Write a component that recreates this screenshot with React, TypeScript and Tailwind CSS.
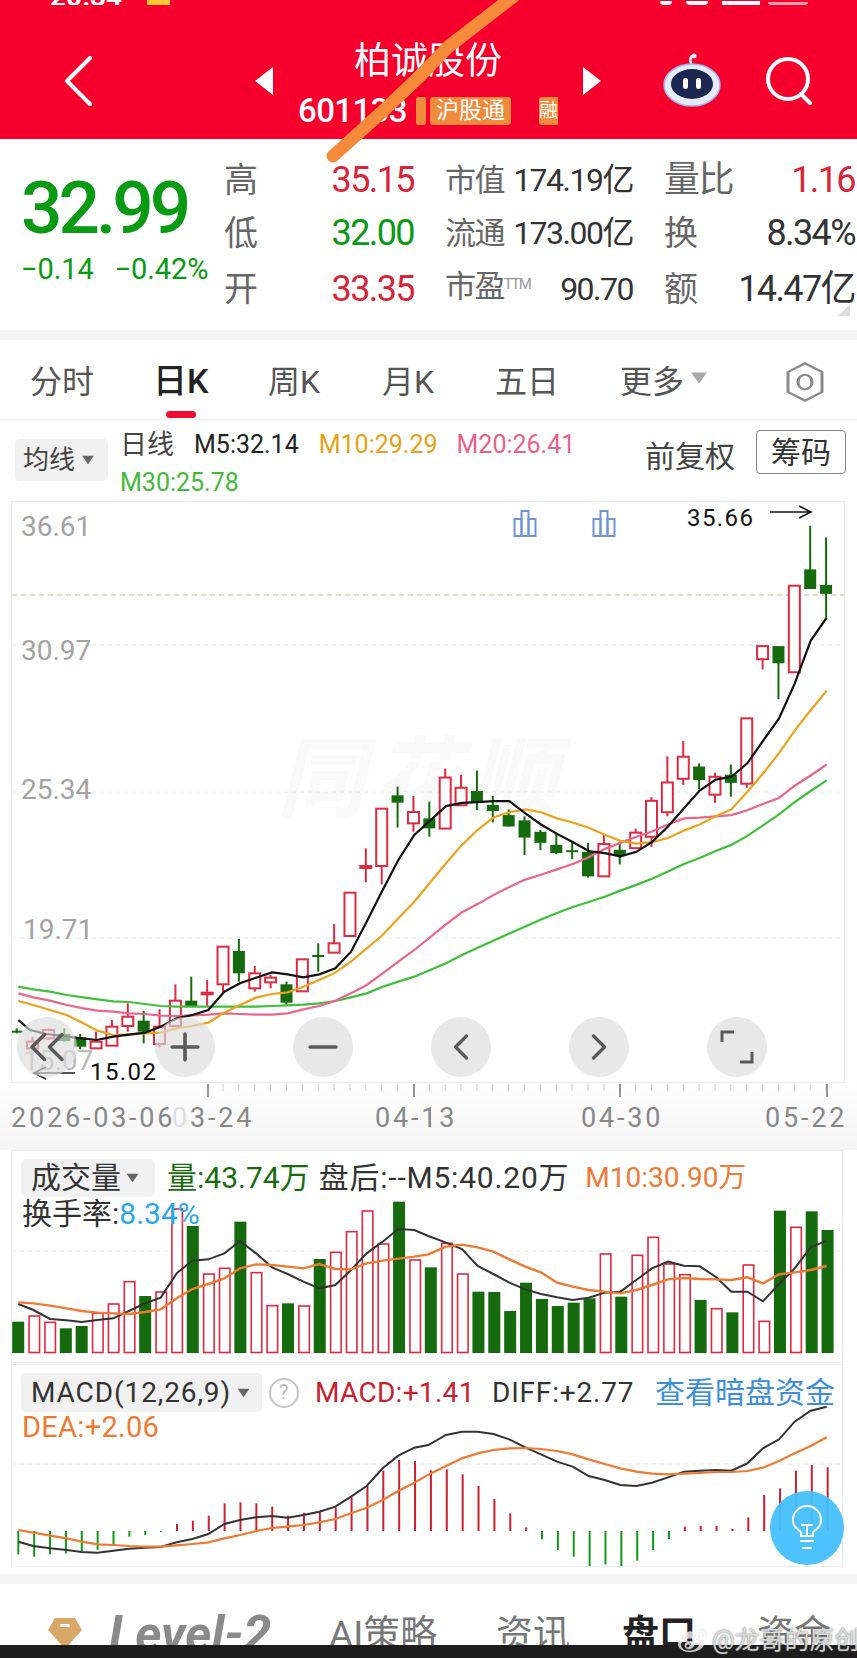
import React from "react";
import { ChevronLeft, ChevronRight, ChevronsLeft, Minus, Plus } from "lucide-react";
import { FaWeibo } from "react-icons/fa";

type P = [number, number];
const X = (i: number) => 16.7 + 15.87 * i;
const A = (v: number) => 640 + v / 3;
const B = (v: number) => 500 + v / 2.45;

// type, bodyTop, bodyBottom, wickTop, wickBottom (zoom units; first 27 use A, the rest use B)
const candles: [string, number, number, number, number][] = [
  ["g", 1172, 1178, 1165, 1180], ["r", 1205, 1225, 1190, 1228], ["r", 1170, 1195, 1165, 1200], ["g", 1182, 1203, 1165, 1205],
  ["g", 1192, 1220, 1182, 1228], ["r", 1205, 1225, 1175, 1225], ["r", 1160, 1217, 1140, 1217], ["r", 1130, 1158, 1090, 1175],
  ["g", 1142, 1175, 1113, 1210], ["r", 1160, 1212, 1108, 1222], ["r", 1082, 1158, 1033, 1158], ["g", 1082, 1098, 1010, 1098],
  ["r", 1058, 1063, 1020, 1098], ["r", 920, 1033, 920, 1060], ["g", 933, 1000, 897, 1025], ["r", 1000, 1045, 978, 1055],
  ["r", 1013, 1027, 1005, 1045], ["g", 1033, 1088, 1025, 1097], ["r", 958, 1054, 958, 1054], ["g", 945, 950, 910, 995],
  ["r", 910, 938, 852, 938], ["r", 758, 888, 758, 888], ["r", 678, 684, 625, 727], ["r", 506, 678, 506, 733],
  ["g", 466, 488, 440, 563], ["r", 516, 550, 468, 575], ["g", 535, 565, 485, 590],
  ["r", 680, 805, 658, 805], ["r", 705, 748, 673, 748], ["g", 713, 740, 663, 760], ["g", 747, 762, 725, 790],
  ["g", 772, 800, 758, 800], ["g", 785, 827, 775, 870], ["g", 813, 840, 808, 858], ["g", 845, 865, 815, 868],
  ["g", 858, 862, 838, 880], ["g", 862, 922, 840, 925], ["r", 843, 922, 820, 922], ["g", 857, 872, 840, 893],
  ["r", 815, 853, 805, 853], ["r", 737, 825, 728, 850], ["r", 692, 765, 628, 775], ["r", 629, 683, 590, 698],
  ["g", 653, 686, 645, 708], ["r", 678, 722, 668, 742], ["g", 673, 693, 648, 727], ["r", 535, 695, 535, 705],
  ["r", 358, 390, 358, 415], ["g", 358, 400, 358, 488], ["r", 210, 422, 210, 422], ["g", 170, 218, 63, 218], ["g", 208, 230, 92, 288],
];

const mk = (a: number[], b: number[]) => {
  const out: P[] = [];
  for (let k = 0; k < a.length; k += 2) out.push([a[k] / 3, A(a[k + 1])]);
  for (let k = 0; k < b.length; k += 2) out.push([430 + b[k] / 3, B(b[k + 1])]);
  return out.map((p) => p.join(",")).join(" ");
};

const ma5 = mk(
  [55,1140,90,1170,140,1182,245,1195,290,1200,340,1190,435,1178,482,1160,530,1135,577,1125,625,1110,673,1055,720,1030,768,1013,816,997,863,1003,910,1012,958,1003,1006,985,1053,935,1100,845,1148,750,1195,660,1243,585],
  [48,750,96,742,143,740,190,738,238,738,286,768,333,795,381,818,428,838,476,860,524,865,571,873,619,862,666,838,714,800,762,755,809,712,857,685,904,678,952,645,999,590,1047,535,1094,450,1142,345,1190,288]
);
const ma10 = mk(
  [55,1083,100,1095,150,1110,200,1125,250,1150,292,1172,340,1185,387,1183,435,1180,482,1178,530,1165,577,1158,625,1148,673,1118,720,1095,768,1073,816,1062,863,1057,910,1040,958,1020,1006,998,1053,965,1100,925,1148,885,1195,835,1243,785],
  [48,890,96,845,143,808,190,778,238,765,286,758,333,765,381,780,428,790,476,803,524,820,571,835,619,842,666,838,714,828,762,810,809,795,857,775,904,758,952,715,999,670,1047,620,1094,565,1142,515,1190,467]
);
const ma20 = mk(
  [55,1060,100,1072,150,1082,200,1095,250,1105,292,1112,340,1115,387,1120,435,1122,482,1127,530,1128,577,1126,625,1124,673,1120,720,1122,768,1124,816,1124,863,1120,910,1108,958,1098,1006,1082,1053,1060,1100,1035,1148,1000,1195,965,1243,930],
  [48,1040,96,1010,143,990,190,968,238,948,286,930,333,918,381,905,428,892,476,875,524,855,571,840,619,825,666,812,714,795,762,780,809,778,857,775,904,772,952,760,999,745,1047,730,1094,700,1142,675,1190,648]
);
const ma30 = mk(
  [55,1040,100,1048,150,1055,200,1065,250,1072,292,1078,340,1084,387,1086,435,1092,482,1098,530,1100,577,1100,625,1100,673,1100,720,1100,768,1100,816,1098,863,1096,910,1094,958,1090,1006,1083,1053,1072,1100,1060,1148,1040,1195,1025,1243,1010],
  [48,1135,96,1115,143,1097,190,1080,238,1062,286,1045,333,1028,381,1012,428,997,476,985,524,972,571,957,619,943,666,928,714,910,762,892,809,877,857,860,904,845,952,823,999,797,1047,770,1094,740,1142,713,1190,687]
);

const mkV = (base: number, a: number[], b: number[]) => {
  const out: P[] = [];
  for (let k = 0; k < a.length; k += 2) out.push([a[k] / 3, base + a[k + 1] / 3]);
  for (let k = 0; k < b.length; k += 2) out.push([430 + b[k] / 3, base + b[k + 1] / 3]);
  return out.map((p) => p.join(",")).join(" ");
};

const vol: [string, number][] = [
  ["g",545],["r",528],["r",547],["g",565],["g",558],["r",520],["r",492],["r",425],["g",468],["r",456],["r",207],["g",258],["r",402],["r",385],["g",245],["r",398],["r",497],["g",490],["r",498],["g",357],["r",337],["r",275],["r",213],["r",312],["g",185],["r",360],["g",382],
  ["r",310],["r",402],["g",455],["g",456],["g",513],["g",428],["g",477],["g",498],["g",488],["g",475],["r",342],["g",470],["r",346],["r",292],["r",372],["r",404],["g",480],["r",506],["g",517],["r",375],["r",544],["g",212],["r",262],["g",214],["g",270],
];
const volM5 = mkV(1140,
  [55,492,100,510,150,537,200,541,245,546,292,540,340,535,387,513,435,490,482,473,530,400,577,362,625,358,673,340,720,303,768,340,816,382,863,402,910,425,958,445,1006,435,1053,390,1100,340,1148,305,1195,267,1243,270,1285,288],
  [48,308,96,327,143,378,190,402,238,428,286,448,333,462,381,472,428,480,476,473,524,458,571,455,619,420,666,385,714,365,762,377,809,379,857,410,904,455,952,455,999,484,1047,432,1094,385,1142,322,1190,302]
);
const volM10 = mkV(1140,
  [55,487,100,490,150,497,200,505,245,513,292,518,340,520,387,522,435,516,482,508,530,475,577,447,625,432,673,415,720,385,768,373,816,375,863,380,910,385,958,372,1006,387,1053,388,1100,370,1148,362,1195,356,1243,350,1285,343],
  [48,320,96,314,143,322,190,335,238,358,286,380,333,397,381,428,428,440,476,450,524,455,571,460,619,450,666,435,714,418,762,414,809,417,857,418,904,420,952,412,999,430,1047,403,1094,397,1142,390,1190,378]
);

const hist = [583,590,583,580,575,570,552,530,525,516,492,482,467,430,427,430,440,467,458,455,443,412,378,332,300,303,331,328,343,378,417,460,502,538,570,590,618,613,618,602,570,537,500,498,498,506,472,405,385,332,315,322];
const diff = mkV(1360,
  [55,545,100,558,150,565,200,570,245,576,292,578,340,572,387,566,435,563,482,561,530,547,577,537,625,522,673,492,720,480,768,472,816,468,863,473,910,465,958,455,1006,440,1053,410,1100,378,1148,325,1195,287,1243,263,1285,255],
  [48,225,96,215,143,215,190,222,238,238,286,262,333,283,381,305,428,320,476,348,524,360,571,375,619,378,666,368,714,352,762,335,809,332,857,330,904,332,952,310,999,265,1047,238,1094,185,1142,152,1190,140]
);
const dea = mkV(1360,
  [55,510,100,518,150,527,200,535,245,545,292,553,340,555,387,558,435,560,482,560,530,556,577,552,625,547,673,535,720,525,768,513,816,504,863,500,910,495,958,487,1006,477,1053,460,1100,443,1148,420,1195,393,1243,368,1285,344],
  [48,318,96,295,143,280,190,270,238,265,286,264,333,267,381,273,428,283,476,298,524,312,571,325,619,335,666,341,714,343,762,341,809,339,857,336,904,336,952,333,999,323,1047,303,1094,280,1142,258,1190,232]
);

const RED = "#de2a40";
const GREEN = "#156a0e";

function Caret({ className }: { className: string }) {
  return (
    <svg viewBox="0 0 16 12" className={className}>
      <path d="M1 1h14L8 11z" fill="currentColor" />
    </svg>
  );
}

function Header() {
  return (
    <div className="h-[139px] bg-[#f5002c] text-white">
      <div className="flex h-[5px] items-end overflow-hidden pl-[50px]">
        <span className="-mb-[7px] w-[97px] text-[28px] leading-[30px] font-bold">20:34</span>
        <span className="h-[5px] w-[23px] bg-[#ffc933]" />
        <span className="ml-[490px] h-[4px] w-[12px] rounded-b-full bg-white" />
        <span className="ml-[14px] h-[4px] w-[22px] rounded-b bg-white" />
        <span className="ml-[14px] h-[4px] w-[38px] bg-white" />
        <span className="ml-[8px] h-[3px] w-[40px] rounded-b bg-[#f9a0ae]" />
      </div>
      <div className="flex h-[134px]">
        <div className="flex w-[255px] items-center pt-[17px] pl-[64px]">
          <svg viewBox="0 0 28 50" className="h-[50px] w-[28px]" fill="none" stroke="white" strokeWidth="4" strokeLinecap="round" strokeLinejoin="round">
            <path d="M26 2 3 25l23 23" />
          </svg>
        </div>
        <div className="flex w-[18px] items-center pt-[18px]">
          <svg viewBox="0 0 18 28" className="h-[28px] w-[18px]"><path d="M18 0v28L0 14z" fill="white" /></svg>
        </div>
        <div className="flex w-[310px] flex-col items-center">
          <div className="mt-[34px] h-[46px] text-[37px] leading-[46px]">柏诚股份</div>
          <div className="mt-[11px] flex h-[30px] w-[310px] items-center overflow-hidden">
            <span className="ml-[25px] w-[111px] text-[33px] leading-[30px] font-medium tracking-[-0.6px]">601133</span>
            <span className="ml-[7px] h-[28px] w-[10px] rounded-[2px] bg-[#f08a3c]" />
            <span className="ml-[4px] flex h-[28px] w-[81px] items-center justify-center rounded-[3px] bg-[#f08a3c] text-[23px]">沪股通</span>
            <span className="ml-[28px] flex h-[28px] w-[19px] items-center overflow-hidden rounded-l-[3px] bg-[#f08a3c] text-[19px]">融</span>
          </div>
        </div>
        <div className="flex w-[18px] items-center pt-[18px]">
          <svg viewBox="0 0 18 28" className="h-[28px] w-[18px]"><path d="M0 0v28l18-14z" fill="white" /></svg>
        </div>
        <div className="ml-[62px] flex w-[58px] items-center pt-[14px]">
          <svg viewBox="0 0 58 56" className="h-[56px] w-[58px]">
            <path d="M29 14c-3-4-2-9 2-10" fill="none" stroke="#e8eefc" strokeWidth="2.5" />
            <circle cx="31" cy="5" r="2.5" fill="#e8eefc" />
            <ellipse cx="29" cy="34" rx="28" ry="21" fill="#e3ebfa" />
            <ellipse cx="29" cy="34" rx="28" ry="21" fill="none" stroke="#9db4ee" strokeWidth="1.5" />
            <ellipse cx="29" cy="33" rx="21" ry="15" fill="#1c2750" />
            <rect x="20" y="27" width="5" height="11" rx="2.5" fill="white" />
            <rect x="33" y="27" width="5" height="11" rx="2.5" fill="white" />
          </svg>
        </div>
        <div className="ml-[44px] flex items-center pt-[18px]">
          <svg viewBox="0 0 48 48" className="h-[48px] w-[48px]" fill="none" stroke="white" strokeWidth="4" strokeLinecap="round">
            <ellipse cx="23" cy="22" rx="20" ry="20" />
            <path d="M36 37l9 9" />
          </svg>
        </div>
      </div>
    </div>
  );
}

function Cell({ label, sup, value, color, labelClass }: { label: string; sup?: string; value: string; color: string; labelClass: string }) {
  return (
    <div className="flex items-center justify-between leading-[53px]">
      <span className={labelClass}>
        {label}
        {sup && <span className="relative -top-[8px] text-[15px] text-[#999]">{sup}</span>}
      </span>
      <span className={color}>{value}</span>
    </div>
  );
}

const big = "text-[34px] text-[#666]";
const wide = "text-[36px] text-[#666]";
const mid = "text-[31px] text-[#666]";

function Quote() {
  return (
    <div className="flex h-[191px] bg-white">
      <div className="w-[224px] pl-[21px]">
        <div className="mt-[29px] text-[73px] leading-[80px] font-medium tracking-[-4px] text-[#089a12]">32.99</div>
        <div className="mt-[6px] flex gap-[21px] text-[29px] leading-[30px] tracking-[-0.1px] text-[#089a12]">
          <span>−0.14</span>
          <span className="whitespace-nowrap">−0.42%</span>
        </div>
      </div>
      <div className="mt-[15px] grid h-[160px] grid-cols-[190px_188px_191px] gap-x-[31px] text-[36px] tracking-[-1.6px]">
        <Cell labelClass={big} label="高" value="35.15" color="text-[#d9233a]" />
        <Cell labelClass={mid} label="市值" value="174.19亿" color="text-[#333] text-[32px] tracking-[-1.5px]" />
        <Cell labelClass={wide} label="量比" value="1.16" color="text-[#d9233a]" />
        <Cell labelClass={big} label="低" value="32.00" color="text-[#089a12]" />
        <Cell labelClass={mid} label="流通" value="173.00亿" color="text-[#333] text-[32px] tracking-[-1.5px]" />
        <Cell labelClass={big} label="换" value="8.34%" color="text-[#333]" />
        <Cell labelClass={big} label="开" value="33.35" color="text-[#d9233a]" />
        <Cell labelClass={mid} label="市盈" sup="TTM" value="90.70" color="text-[#333] text-[32px] tracking-[-1.5px]" />
        <Cell labelClass={big} label="额" value="14.47亿" color="text-[#333]" />
      </div>
    </div>
  );
}

function Tabs() {
  return (
    <div className="relative flex h-[80px] items-center border-b border-[#f0f0f0] bg-white pt-[4px] text-[32px] text-[#555]">
      <span className="ml-[30px] w-[123px]">分时</span>
      <span className="relative w-[115px] text-[34px] font-medium text-[#222]">
        日K
        <span className="absolute top-[55px] left-[13px] h-[7px] w-[30px] rounded-full bg-[#ef0a2e]" />
      </span>
      <span className="w-[114px]">周K</span>
      <span className="w-[113px]">月K</span>
      <span className="w-[125px]">五日</span>
      <span>更多</span>
      <Caret className="mb-[8px] ml-[6px] h-[14px] w-[18px] text-[#aaa]" />
      <svg viewBox="0 0 38 60" className="ml-[78px] h-[40px] w-[38px]" preserveAspectRatio="none" fill="none" stroke="#8a8a8a" strokeWidth="3">
        <path d="M19 2 36 15v30L19 58 2 45V15z" />
        <ellipse cx="19" cy="30" rx="7" ry="11" />
      </svg>
    </div>
  );
}

function InfoRow() {
  return (
    <div className="flex h-[81px] bg-white">
      <div className="mt-[19px] ml-[15px] flex h-[42px] w-[93px] items-center rounded-[5px] bg-[#f1f1f1] pl-[8px] text-[26px] text-[#444]">
        均线
        <Caret className="ml-[6px] h-[10px] w-[14px] text-[#666]" />
      </div>
      <div className="ml-[12px] w-[492px] pt-[4px] text-[25px] leading-[34px]">
        <div className="flex h-[42px] items-center">
          <span className="text-[27px] text-[#444]">日线</span>
          <span className="ml-[20px] text-[#222]">M5:32.14</span>
          <span className="ml-[20px] text-[#e6a21a]">M10:29.29</span>
          <span className="ml-[19px] text-[#e9628b]">M20:26.41</span>
        </div>
        <div className="text-[#43b93c]">M30:25.78</div>
      </div>
      <div className="mt-[16px] ml-[33px] w-[90px] text-[30px] leading-[42px] text-[#444]">前复权</div>
      <div className="mt-[10px] ml-[21px] flex h-[44px] w-[90px] items-center justify-center rounded-[4px] border border-[#888] text-[30px] text-[#333]">筹码</div>
    </div>
  );
}

function MainChart() {
  return (
    <div className="relative ml-[11px] h-[582px] w-[834px] border border-[#ededed]">
      <span className="absolute top-[228px] left-[265px] text-[88px] leading-[100px] font-bold tracking-[8px] text-[#f9f9f9] italic">同花顺</span>
      <svg viewBox="12 502 832 580" className="relative block h-[580px] w-[832px]" fill="none">
        {[645, 792, 938].map((y) => (
          <line key={y} x1="12" x2="844" y1={y} y2={y} stroke="#eaeaea" strokeDasharray="4 4" />
        ))}
        <line x1="12" x2="844" y1="595" y2="595" stroke="#c9b78a" strokeDasharray="5 4" />
        {candles.map((c, i) => {
          const f = i < 27 ? A : B;
          const x = X(i);
          const col = c[0] === "r" ? RED : GREEN;
          const t = f(c[1]);
          const b = f(c[2]);
          return (
            <g key={i}>
              <line x1={x} x2={x} y1={f(c[3])} y2={f(c[4])} stroke={col} strokeWidth="2" />
              {c[0] === "r" ? (
                <rect x={x - 5.5} y={t} width="11" height={Math.max(b - t, 1)} fill="white" stroke={col} strokeWidth="2" />
              ) : (
                <rect x={x - 6} y={t} width="12" height={Math.max(b - t, 2)} fill={col} />
              )}
            </g>
          );
        })}
        <polyline points={ma30} stroke="#3fbf3a" strokeWidth="2.2" />
        <polyline points={ma20} stroke="#e9668c" strokeWidth="2.2" />
        <polyline points={ma10} stroke="#e8a41c" strokeWidth="2.2" />
        <polyline points={ma5} stroke="#111" strokeWidth="2.2" />
        {[525, 604].map((x) => (
          <g key={x} stroke="#6f94d6" strokeWidth="2">
            <rect x={x - 10.5} y="519" width="7" height="17" />
            <rect x={x - 3.5} y="511" width="7" height="25" />
            <rect x={x + 3.5} y="519" width="7" height="17" />
          </g>
        ))}
        <text x="21" y="536" className="fill-[#a3a3a3] text-[28px]">36.61</text>
        <text x="21" y="660" className="fill-[#a3a3a3] text-[28px]">30.97</text>
        <text x="21" y="799" className="fill-[#a3a3a3] text-[28px]">25.34</text>
        <text x="23" y="939" className="fill-[#a3a3a3] text-[28px]">19.71</text>
        <text x="23" y="1070" className="fill-[#bbb] text-[28px]">15.07</text>
        <text x="687" y="526" className="fill-[#111] text-[24px]" textLength="66">35.66</text>
        <text x="90" y="1080" className="fill-[#111] text-[24px]" textLength="66">15.02</text>
        <path d="M770 512h41m-12-6 12 6-12 6" stroke="#111" strokeWidth="1.6" />
        <path d="M75 1073H34m12-6-12 6 12 6" stroke="#222" strokeWidth="1.6" />
      </svg>
      <div className="absolute top-[515px] left-[5px] flex gap-[78px]">
        {[
          <ChevronsLeft key="a" size={60} strokeWidth={1.4} />,
          <Plus key="b" size={44} strokeWidth={2} />,
          <Minus key="c" size={44} strokeWidth={2} />,
          <ChevronLeft key="d" size={44} strokeWidth={1.8} />,
          <ChevronRight key="e" size={44} strokeWidth={1.8} />,
          <svg key="f" viewBox="0 0 34 34" className="h-[34px] w-[34px]" fill="none" stroke="currentColor" strokeWidth="3">
            <path d="M2 12V2h12M32 22v10H20" />
          </svg>,
        ].map((icon, i) => (
          <div key={i} className="flex h-[60px] w-[60px] items-center justify-center rounded-full bg-[#dcdcdc]/65 text-[#5a5a5a]">
            {icon}
          </div>
        ))}
      </div>
    </div>
  );
}

function AxisStrip() {
  const ticks = candles.map((_, i) => X(i)).slice(13);
  return (
    <div className="h-[67px] bg-gradient-to-b from-white to-[#f4f4f4]">
      <svg viewBox="0 0 857 18" className="block h-[18px] w-[857px]" fill="none">
        {ticks.map((x, i) => (
          <line key={i} x1={x} x2={x} y1="1" y2="8" stroke="#ccc" strokeWidth="1" />
        ))}
        {[208, 414, 620, 827].map((x) => (
          <line key={x} x1={x} x2={x} y1="1" y2="14" stroke="#777" strokeWidth="1.5" />
        ))}
      </svg>
      <div className="flex pt-[1px] pl-[11px] text-[27px] leading-[32px] tracking-[2.8px] text-[#888]">
        <span className="w-[161px] whitespace-nowrap">2026-03-06</span>
        <span className="w-[203px] whitespace-nowrap"><span className="text-[#ddd]">0</span>3-24</span>
        <span className="w-[206px]">04-13</span>
        <span className="w-[184px]">04-30</span>
        <span>05-22</span>
      </div>
    </div>
  );
}

function VolumePanel() {
  return (
    <div className="relative ml-[11px] h-[213px] w-[832px] border border-[#eee] bg-white">
      <svg viewBox="12 1151 830 211" className="absolute top-0 left-0 block h-[211px] w-[830px]" fill="none">
        <line x1="12" x2="842" y1="1251" y2="1251" stroke="#eaeaea" strokeDasharray="4 4" />
        {vol.map((v, i) => {
          const x = X(i) + 1.5;
          const t = 1140 + v[1] / 3;
          return v[0] === "g" ? (
            <rect key={i} x={x - 6} y={t} width="12" height={1353 - t} fill={GREEN} />
          ) : (
            <rect key={i} x={x - 5} y={t} width="10.5" height={1352.5 - t} fill="white" stroke={RED} strokeWidth="1.6" />
          );
        })}
        <polyline points={volM5} stroke="#333" strokeWidth="2" />
        <polyline points={volM10} stroke="#ee7a33" strokeWidth="2.4" />
      </svg>
      <div className="relative pt-[8px] pl-[9px] text-[30px] leading-[38px] text-[#333]">
        <div className="flex items-center">
          <span className="flex h-[38px] w-[134px] items-center rounded-[5px] bg-[#f1f1f1] pl-[10px] text-[30px]">
            成交量
            <Caret className="ml-[4px] h-[10px] w-[15px] text-[#666]" />
          </span>
          <span className="ml-[12px] text-[#1a6b10]">量:43.74万</span>
          <span className="ml-[9px] whitespace-nowrap tracking-[0.8px]">盘后:--M5:40.20万</span>
          <span className="ml-[16px] whitespace-nowrap text-[28px] text-[#ee7a33]">M10:30.90万</span>
        </div>
        <div className="leading-[34px]">
          <span className="pl-[1px]">换手率:</span>
          <span className="text-[#2aa8e8]">8.34%</span>
        </div>
      </div>
    </div>
  );
}

function MacdPanel() {
  return (
    <div className="relative mt-[1px] ml-[11px] h-[203px] w-[832px] border border-[#eee] bg-white">
      <svg viewBox="12 1365 830 201" className="absolute top-0 left-0 block h-[201px] w-[830px]" fill="none">
        <line x1="12" x2="842" y1="1464" y2="1464" stroke="#e4e4e4" strokeDasharray="4 4" />
        {hist.map((v, i) => {
          const y = 1360 + v / 3;
          const red = v < 513;
          return <line key={i} x1={X(i) + 1.6} x2={X(i) + 1.6} y1={y} y2={1531} stroke={red ? "#c8202f" : "#0e9a18"} strokeWidth="2" />;
        })}
        <polyline points={diff} stroke="#333" strokeWidth="2" />
        <polyline points={dea} stroke="#ee7a33" strokeWidth="2.2" />
      </svg>
      <div className="relative pt-[8px] pl-[9px] text-[28px] leading-[39px] tracking-[0.3px]">
        <div className="flex items-center">
          <span className="flex h-[39px] w-[241px] items-center rounded-[5px] bg-[#f1f1f1] pl-[10px] text-[28px] tracking-[0.9px] whitespace-nowrap text-[#333]">
            MACD(12,26,9)
            <Caret className="ml-[5px] h-[10px] w-[15px] text-[#666]" />
          </span>
          <span className="ml-[7px] flex h-[30px] w-[30px] items-center justify-center rounded-full border-2 border-[#c4c4c4] text-[20px] text-[#bbb]">?</span>
          <span className="ml-[16px] w-[177px] whitespace-nowrap text-[#c8202f]">MACD:+1.41</span>
          <span className="w-[163px] whitespace-nowrap tracking-[0.8px] text-[#333]">DIFF:+2.77</span>
          <span className="whitespace-nowrap text-[30px] tracking-normal text-[#3d8fd8]">查看暗盘资金</span>
        </div>
        <div className="text-[29px] leading-[30px] text-[#ee7a33]">
          <span className="pl-[1px]">DEA:+2.06</span>
        </div>
      </div>
    </div>
  );
}

function BottomTabs() {
  return (
    <div className="mt-[7px]">
      <div className="h-[10px] bg-[#f4f4f4]" />
      <div className="flex h-[61px] items-start overflow-hidden bg-white pt-[26px] text-[37px] leading-[50px] text-[#777]">
        <svg viewBox="0 0 34 32" className="mt-[7px] ml-[48px] h-[32px] w-[34px]">
          <path d="M7 1h20l7 12-17 19L0 13z" fill="#d8a868" />
          <rect x="12" y="7" width="10" height="3" rx="1.5" fill="white" />
        </svg>
        <span className="mt-[-6px] ml-[27px] w-[220px] text-[50px] leading-[60px] font-bold text-[#8a8a8a] italic">Level-2</span>
        <span className="w-[167px] whitespace-nowrap">AI策略</span>
        <span className="w-[126px]">资讯</span>
        <span className="w-[135px] font-bold text-[#222]">盘口</span>
        <span>资金</span>
      </div>
      <div className="h-[13px] bg-[#1d1d1d]" />
    </div>
  );
}

export default function App() {
  return (
    <div className="relative h-[1658px] w-[857px] overflow-hidden bg-white font-[Roboto,'Noto_Sans_CJK_SC',sans-serif]">
      <Header />
      <Quote />
      <div className="h-[10px] bg-[#f4f4f4]" />
      <Tabs />
      <InfoRow />
      <MainChart />
      <AxisStrip />
      <VolumePanel />
      <MacdPanel />
      <BottomTabs />

      <svg viewBox="0 0 857 170" className="pointer-events-none absolute top-0 left-0 h-[170px] w-[857px]" fill="none">
        <path d="M514-4 448 47 420 76 382 112 333 156" stroke="#f58a3a" strokeWidth="13" strokeLinecap="round" strokeLinejoin="round" />
      </svg>
      <svg viewBox="0 0 12 12" className="absolute top-[303px] left-[838px] h-[14px] w-[12px]"><path d="M12 0v12H0z" fill="#ddd" /></svg>

      <div className="absolute top-[1491px] left-[770px] flex h-[74px] w-[74px] items-center justify-center rounded-full bg-[#45bffa]/95">
        <svg viewBox="0 0 30 46" className="h-[46px] w-[30px]" fill="none" stroke="white" strokeWidth="2" strokeLinecap="round">
          <path d="M9 31v-4C5 24 1 21 1 15a14 14 0 0 1 28 0c0 6-4 9-8 12v4z" />
          <path d="M10 20h10M15 20v11M9 36h12M11 43h8" />
        </svg>
      </div>

      <div className="absolute top-[1624px] left-[678px] flex items-center gap-[4px] text-[25px] leading-[34px] text-[#f2f2f2]/80 [text-shadow:0_0_2px_#555]">
        <FaWeibo size={30} />
        <span className="whitespace-nowrap">@龙哥的原创</span>
      </div>
    </div>
  );
}
